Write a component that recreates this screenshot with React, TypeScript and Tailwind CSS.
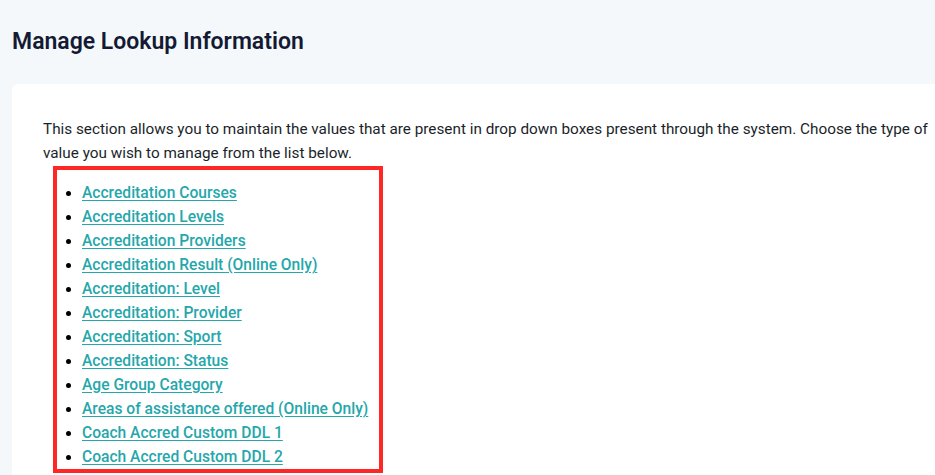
const items = [
  'Accreditation Courses',
  'Accreditation Levels',
  'Accreditation Providers',
  'Accreditation Result (Online Only)',
  'Accreditation: Level',
  'Accreditation: Provider',
  'Accreditation: Sport',
  'Accreditation: Status',
  'Age Group Category',
  'Areas of assistance offered (Online Only)',
  'Coach Accred Custom DDL 1',
  'Coach Accred Custom DDL 2',
];

export default function App() {
  return (
    <div
      className="h-[475px] w-[935px] overflow-hidden bg-[#f5f8fb] pl-3"
      style={{ fontFamily: 'Roboto, "Liberation Sans", sans-serif' }}
    >
      <h1 className="pt-[27px] text-[23px] font-semibold leading-[30px] text-[#141a33]">
        Manage Lookup Information
      </h1>
      <div className="mt-[27px] w-[960px] rounded-md bg-white pl-[31px] pt-[33px] pb-10">
        <p className="w-[905px] text-[15.3px] leading-6 text-[#1b1f2a]">
          This section allows you to maintain the values that are present in drop down boxes present through the
          system. Choose the type of value you wish to manage from the list below.
        </p>
        <ul className="ml-[10px] mt-[1px] w-[330px] border-4 border-[#ff2626] pt-[11px] pl-[25px] list-disc text-[15.6px] leading-6">
          {items.map((item) => (
            <li key={item} className="marker:text-black">
              <a href="#" className="font-medium text-[#25a7ab] underline underline-offset-2">
                {item}
              </a>
            </li>
          ))}
        </ul>
      </div>
    </div>
  );
}
